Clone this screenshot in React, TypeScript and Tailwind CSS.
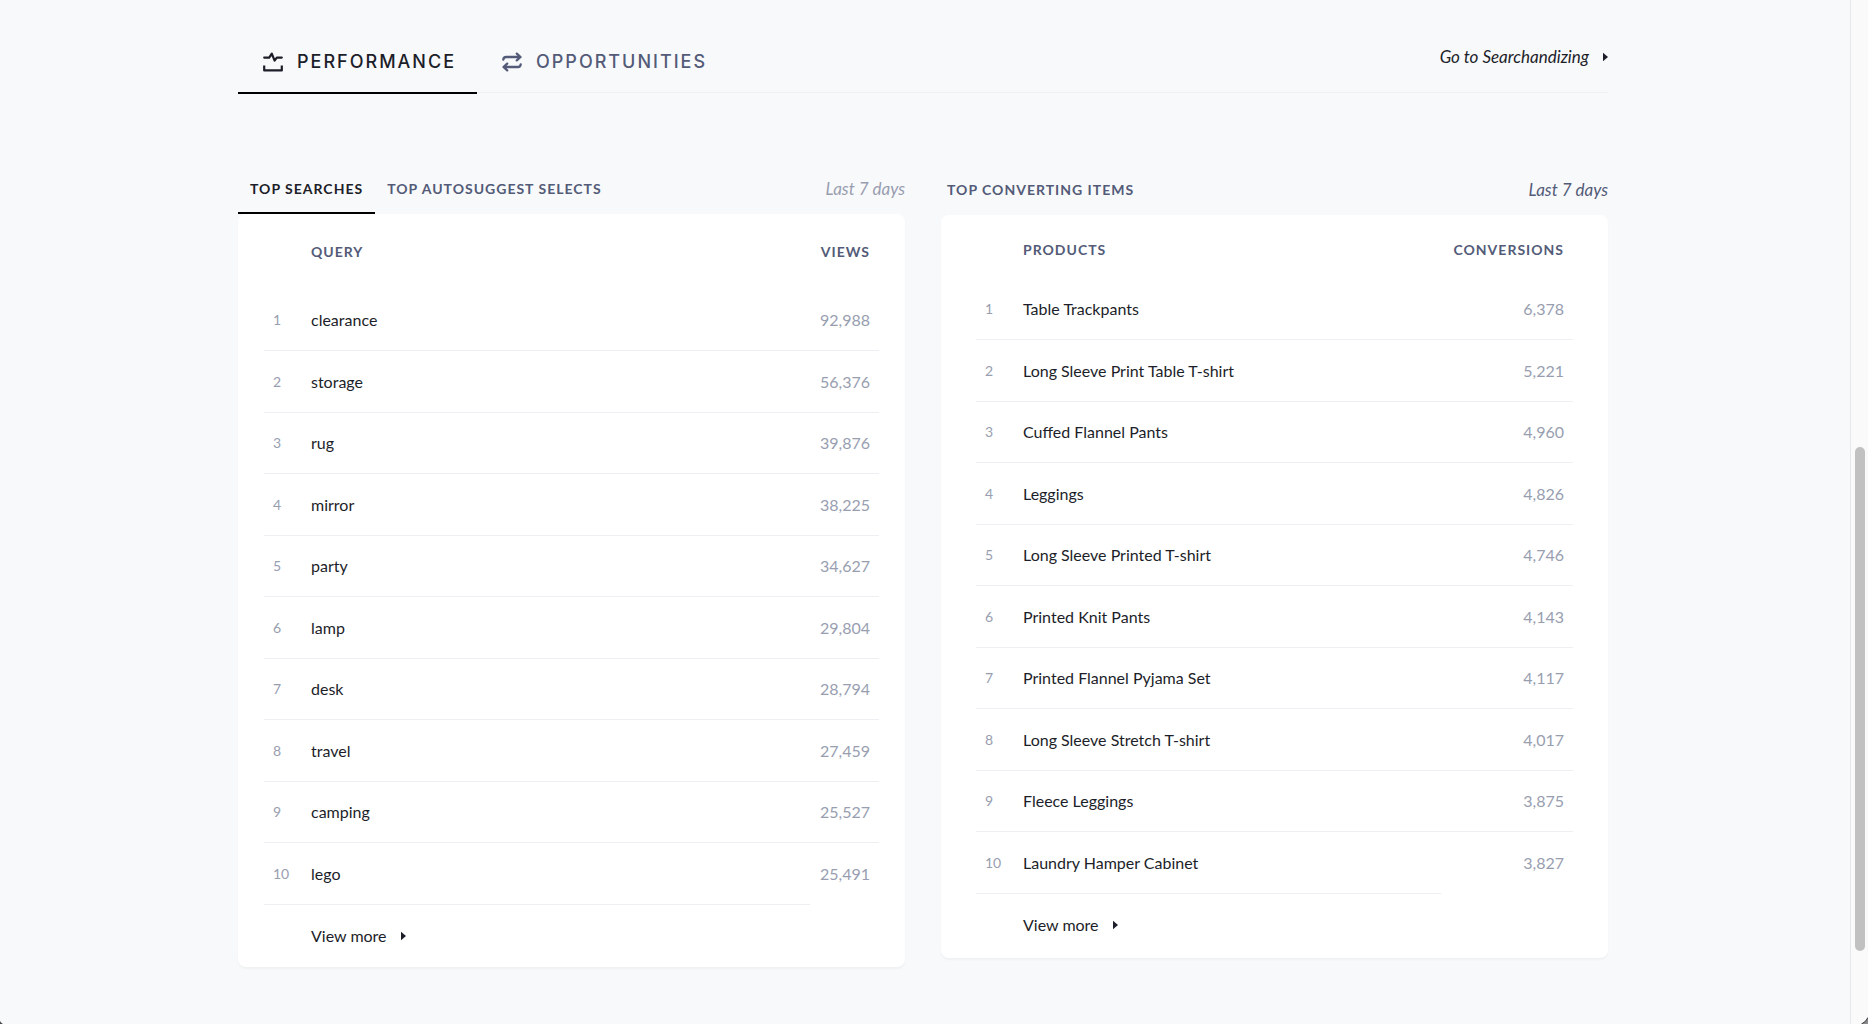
import { useState } from "react"
import clsx from "clsx"

interface Row {
  name: string
  count: string
}

const searches: Row[] = [
  { name: "clearance", count: "92,988" },
  { name: "storage", count: "56,376" },
  { name: "rug", count: "39,876" },
  { name: "mirror", count: "38,225" },
  { name: "party", count: "34,627" },
  { name: "lamp", count: "29,804" },
  { name: "desk", count: "28,794" },
  { name: "travel", count: "27,459" },
  { name: "camping", count: "25,527" },
  { name: "lego", count: "25,491" },
]

const products: Row[] = [
  { name: "Table Trackpants", count: "6,378" },
  { name: "Long Sleeve Print Table T-shirt", count: "5,221" },
  { name: "Cuffed Flannel Pants", count: "4,960" },
  { name: "Leggings", count: "4,826" },
  { name: "Long Sleeve Printed T-shirt", count: "4,746" },
  { name: "Printed Knit Pants", count: "4,143" },
  { name: "Printed Flannel Pyjama Set", count: "4,117" },
  { name: "Long Sleeve Stretch T-shirt", count: "4,017" },
  { name: "Fleece Leggings", count: "3,875" },
  { name: "Laundry Hamper Cabinet", count: "3,827" },
]

function PerformanceIcon() {
  return (
    <svg width="20" height="20" viewBox="0 0 20 20" fill="none" stroke="currentColor" strokeWidth="2.2" aria-hidden="true">
      <path d="M1.2 5.6h5L8.8 1.6 11.6 8.6 13.8 5.6H18.8" strokeLinecap="round" strokeLinejoin="round" />
      <path d="M1.2 13.4V18.4H18.8V13.4" strokeLinejoin="round" />
    </svg>
  )
}

function SwapIcon() {
  return (
    <svg
      width="20"
      height="20"
      viewBox="0 0 20 20"
      fill="none"
      stroke="currentColor"
      strokeWidth="2.3"
      strokeLinecap="round"
      strokeLinejoin="round"
      aria-hidden="true"
    >
      <path d="M1.3 7.6Q1.6 5 4 5H18M14.8 1.6 18.5 5 14.8 8.4" />
      <path d="M18.7 12.4Q18.4 15 16 15H2M5.2 11.6 1.5 15 5.2 18.4" />
    </svg>
  )
}

function Caret() {
  return (
    <svg width="5" height="10" viewBox="0 0 5 10" fill="currentColor" aria-hidden="true">
      <path d="M0 .8 5 5 0 9.2Z" />
    </svg>
  )
}

interface RankTableProps {
  nameLabel: string
  countLabel: string
  rows: Row[]
  roomy?: boolean
}

function RankTable({ nameLabel, countLabel, rows, roomy }: RankTableProps) {
  return (
    <table className="w-full border-separate border-spacing-0">
      <thead>
        <tr className={clsx("align-top text-sm tracking-[1px] text-[#535b78]", roomy ? "h-[39px]" : "h-[48px]")}>
          <th className="w-[38px]" />
          <th className="px-[9px] text-left font-bold">{nameLabel}</th>
          <th className={clsx("px-[9px] text-right font-bold", roomy ? "w-[132px]" : "w-[69px]")}>{countLabel}</th>
        </tr>
      </thead>
      <tbody>
        {rows.map((row, i) => (
          <tr key={row.name} className="group h-[61px] even:h-[62px]">
            <td className="border-b border-[#eeeff3] px-[9px] text-sm text-[#989eb0]">{i + 1}</td>
            <td className="border-b border-[#eeeff3] px-[9px] text-base text-[#1c1e29]">{row.name}</td>
            <td className="border-b border-[#eeeff3] px-[9px] text-right text-base text-[#989eb0] group-last:border-transparent">
              {row.count}
            </td>
          </tr>
        ))}
      </tbody>
    </table>
  )
}

function ViewMore() {
  return (
    <a href="#more" className="ml-[47px] inline-flex h-[62px] items-center gap-[14px] text-base text-[#1c1e29]">
      View more
      <Caret />
    </a>
  )
}

const mainTabs = [
  { id: "performance", label: "PERFORMANCE", Icon: PerformanceIcon },
  { id: "opportunities", label: "OPPORTUNITIES", Icon: SwapIcon },
]

const listTabs = ["TOP SEARCHES", "TOP AUTOSUGGEST SELECTS"]

export default function App() {
  const [mainTab, setMainTab] = useState("performance")
  const [listTab, setListTab] = useState("TOP SEARCHES")

  return (
    <div className="relative flex min-h-screen bg-[#f8f9fb] font-['Lato',sans-serif]">
      <main className="min-w-0 flex-1 pt-[30px] pr-[242px] pl-[238px]">
        <header className="flex items-start justify-between border-b border-[#f0f1f3]">
          <div role="tablist" className="-mb-[2px] flex">
            {mainTabs.map(({ id, label, Icon }) => (
              <button
                key={id}
                role="tab"
                aria-selected={mainTab === id}
                onClick={() => setMainTab(id)}
                className={clsx(
                  "flex h-[64px] items-center gap-[14px] rounded-t-xs border-b-2 pt-0.5 pr-[21px] pl-[25px] font-['Inter',sans-serif] text-lg font-medium tracking-[2px]",
                  mainTab === id ? "border-black text-[#1c1e29]" : "border-transparent text-[#535b78]"
                )}
              >
                <Icon />
                {label}
              </button>
            ))}
          </div>
          <a href="#searchandizing" className="mt-[15px] flex items-center gap-[14px] text-[17px]/6 text-[#1c1e29] italic">
            Go to Searchandizing
            <Caret />
          </a>
        </header>

        <div className="grid grid-cols-2 items-start gap-9 pt-[77px]">
          <section>
            <div className="flex h-[44px] items-stretch justify-between">
              <div role="tablist" className="flex">
                {listTabs.map((label) => (
                  <button
                    key={label}
                    role="tab"
                    aria-selected={listTab === label}
                    onClick={() => setListTab(label)}
                    className={clsx(
                      "rounded-t-xs border-b-2 px-3 pb-1 text-sm font-bold tracking-[1px]",
                      listTab === label ? "border-black text-[#1c1e29]" : "border-transparent text-[#535b78]"
                    )}
                  >
                    {label}
                  </button>
                ))}
              </div>
              <span className="self-center pb-[6px] text-[17px]/6 text-[#989eb0] italic">Last 7 days</span>
            </div>
            <div className="rounded-lg bg-white px-[26px] pt-7 shadow-[0_2px_2px_rgba(30,40,60,0.04)]">
              <RankTable nameLabel="QUERY" countLabel="VIEWS" rows={searches} />
              <ViewMore />
            </div>
          </section>

          <section>
            <div className="flex h-[45px] items-center justify-between pb-[6px] pl-[6px] text-[#535b78]">
              <h2 className="text-sm font-bold tracking-[1px]">TOP CONVERTING ITEMS</h2>
              <span className="text-[17px]/6 italic">Last 7 days</span>
            </div>
            <div className="rounded-lg bg-white px-[35px] pt-[25px] pb-0.5 shadow-[0_2px_2px_rgba(30,40,60,0.04)]">
              <RankTable nameLabel="PRODUCTS" countLabel="CONVERSIONS" rows={products} roomy />
              <ViewMore />
            </div>
          </section>
        </div>
      </main>

      {/* scroll track */}
      <div className="flex w-[18px] justify-center border-l border-[#e6e7e8] bg-[#fafafa] pt-[447px]">
        <div className="h-[504px] w-[10px] rounded-full bg-[#c1c1c1]" />
      </div>

      {/* rounded window corners */}
      <svg className="absolute bottom-0 left-0" width="4" height="4" viewBox="0 0 4 4" aria-hidden="true">
        <path d="M0 1Q1 3 3 4H0Z" fill="#4a4a4c" />
      </svg>
      <svg className="absolute right-0 bottom-0" width="7" height="7" viewBox="0 0 7 7" aria-hidden="true">
        <path d="M7 0Q5 5 0 7H7Z" fill="#8a8a8c" />
        <path d="M7 .5Q5 5 .5 7" fill="none" stroke="#3c3c3e" />
      </svg>
    </div>
  )
}
